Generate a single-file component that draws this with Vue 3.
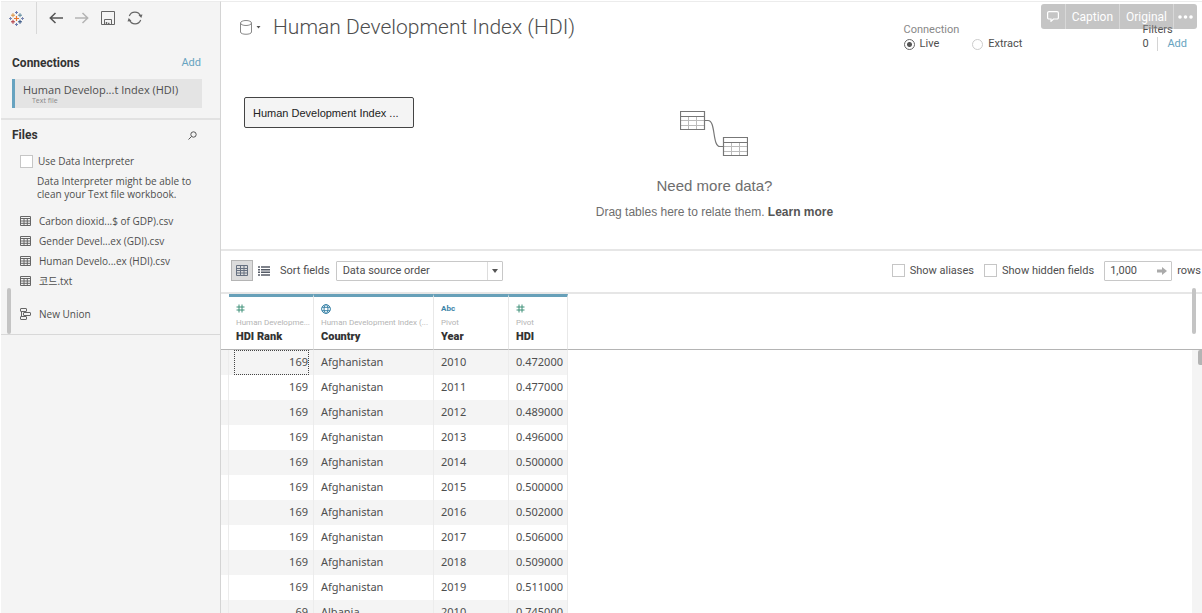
<script setup>
import { ref } from 'vue'

const files = ['Carbon dioxid...$ of GDP).csv', 'Gender Devel...ex (GDI).csv', 'Human Develo...ex (HDI).csv', '코드.txt']
const mode = ref('live')
const interpreter = ref(false)
const aliases = ref(false)
const hidden = ref(false)
const limit = ref('1,000')

const columns = [
  { type: 'number', source: 'Human Developme...', name: 'HDI Rank' },
  { type: 'geo', source: 'Human Development Index (...', name: 'Country' },
  { type: 'text', source: 'Pivot', name: 'Year' },
  { type: 'number', source: 'Pivot', name: 'HDI' },
]
const rows = [
  ['169', 'Afghanistan', '2010', '0.472000'],
  ['169', 'Afghanistan', '2011', '0.477000'],
  ['169', 'Afghanistan', '2012', '0.489000'],
  ['169', 'Afghanistan', '2013', '0.496000'],
  ['169', 'Afghanistan', '2014', '0.500000'],
  ['169', 'Afghanistan', '2015', '0.500000'],
  ['169', 'Afghanistan', '2016', '0.502000'],
  ['169', 'Afghanistan', '2017', '0.506000'],
  ['169', 'Afghanistan', '2018', '0.509000'],
  ['169', 'Afghanistan', '2019', '0.511000'],
  ['69', 'Albania', '2010', '0.745000'],
]
</script>

<template>
  <div class="app">
    <aside class="sidebar">
      <nav class="tools">
        <button class="logo" aria-label="Start page">
          <svg width="15" height="15" viewBox="0 0 15 15" fill="none">
            <path d="M7.5 5v5M5 7.5h5" stroke="#e8762d" stroke-width="1.2" />
            <path d="M4 2.2v4M2 4.2h4" stroke="#d9903d" />
            <path d="M11 2.2v4M9 4.2h4" stroke="#5b879b" />
            <path d="M4 8.8v4M2 10.8h4" stroke="#b0343c" />
            <path d="M11 8.8v4M9 10.8h4" stroke="#2a4a7c" />
            <path d="M7.5 0v3M6 1.5h3M7.5 12v3M6 13.5h3" stroke="#6b7bb0" />
            <path d="M1.5 6v3M0 7.5h3M13.5 6v3M12 7.5h3" stroke="#7a86b0" />
          </svg>
        </button>
        <button aria-label="Back">
          <svg width="14" height="12" viewBox="0 0 14 12" fill="none" stroke="#555" stroke-width="1.5"><path d="M14 6H1M6.500 1L1.300 6l5.200 5" /></svg>
        </button>
        <button aria-label="Forward">
          <svg width="14" height="12" viewBox="0 0 14 12" fill="none" stroke="#b4b4b4" stroke-width="1.500"><path d="M0 6h13M7.500 1l5.200 5-5.200 5" /></svg>
        </button>
        <button aria-label="Save">
          <svg width="14" height="14" viewBox="0 0 14 14" fill="none" stroke="#666"><path d="M.5.5h13v13h-13zM3.500 13.500v-5h7v5" /><path d="M5.500 11v2.500M7 12.500h1.500" stroke-width="1.500" /></svg>
        </button>
        <button aria-label="Refresh">
          <svg width="16" height="14" viewBox="0 0 16 14" fill="none" stroke="#666" stroke-width="1.200"><path d="M2.300 5A6 6 0 0 1 13.500 5M13.700 9A6 6 0 0 1 2.500 9" /><path d="M11.500 4l4-.5L14.300 7zM4.500 10l-4 .5L1.700 7z" fill="#666" stroke="none" /></svg>
        </button>
      </nav>

      <section class="connections">
        <div class="head"><h2>Connections</h2><a href="#">Add</a></div>
        <button class="connection">
          <span>Human Develop...t Index (HDI)</span>
          <small>Text file</small>
        </button>
      </section>

      <section class="files">
        <div class="head">
          <h2>Files</h2>
          <button aria-label="Search files">
            <svg width="9" height="9" viewBox="0 0 9 9" fill="none" stroke="#555"><circle cx="5.500" cy="3.500" r="2.700" /><path d="M3.500 5.500L.5 8.500" /></svg>
          </button>
        </div>
        <label class="interpreter"><input v-model="interpreter" type="checkbox" />Use Data Interpreter</label>
        <p>Data Interpreter might be able to clean your Text file workbook.</p>
        <ul>
          <li v-for="file in files" :key="file">
            <button class="file">
              <svg width="11" height="10" viewBox="0 0 11 10" fill="none" stroke="#666"><path d="M.5.5h10v9H.5zM.5 2.500h10M.5 5h10M.5 7.300h10M4 2.500v7M7.300 2.500v7" /></svg>
              {{ file }}
            </button>
          </li>
        </ul>
        <button class="file union">
          <svg width="11" height="12" viewBox="0 0 11 12" fill="none" stroke="#666"><rect x=".5" y=".5" width="6" height="3" rx=".5" /><rect x="3.500" y="4.500" width="7" height="3" rx=".5" /><rect x=".5" y="8.500" width="6" height="3" rx=".5" /><path d="M1.500 3.500v5" /></svg>
          New Union
        </button>
        <i class="thumb"></i>
      </section>
    </aside>

    <main class="main">
      <header class="top">
        <button class="source" aria-label="Data source menu">
          <svg width="21" height="15" viewBox="0 0 21 15" fill="none" stroke="#888"><ellipse cx="6" cy="3" rx="5.500" ry="2.500" /><path d="M.5 3v9c0 3 11 3 11 0V3" /><path d="M16.500 6h4l-2 2.500z" fill="#555" stroke="none" /></svg>
        </button>
        <h1>Human Development Index (HDI)</h1>
        <fieldset class="mode">
          <legend>Connection</legend>
          <label><input v-model="mode" type="radio" name="mode" value="live" />Live</label>
          <label><input v-model="mode" type="radio" name="mode" value="extract" />Extract</label>
        </fieldset>
        <div class="filters">
          <span>Filters</span>
          <div><b>0</b><a href="#">Add</a></div>
        </div>
        <div class="overlay">
          <button aria-label="Comment">
            <svg width="12" height="11" viewBox="0 0 12 11" fill="none" stroke="#fff" stroke-width="1.200"><path d="M2 .6h8a1.400 1.400 0 0 1 1.400 1.400v4.500A1.400 1.400 0 0 1 10 8H6.500L4 10.300V8H2A1.400 1.400 0 0 1 .6 6.500V2A1.400 1.400 0 0 1 2 .6z" /></svg>
          </button>
          <button>Caption</button>
          <button>Original</button>
          <button aria-label="More">
            <svg width="15" height="4" viewBox="0 0 15 4" fill="#fff"><circle cx="2" cy="2" r="1.800" /><circle cx="7.500" cy="2" r="1.800" /><circle cx="13" cy="2" r="1.800" /></svg>
          </button>
        </div>
      </header>

      <section class="canvas">
        <button class="node">Human Development Index ...</button>
        <div class="hint">
          <svg width="68" height="46" viewBox="0 0 68 46" fill="none">
            <path d="M1 9.500h23M1 14.500h23M8.500 6v13M16.500 6v13M44 35.500h23M44 40.500h23M51.500 32v13M59.500 32v13" stroke="#bbb" />
            <path d="M.5.5h24v18H.5zM.5 5.500h24M43.500 26.500h24v18h-24zM43.500 31.500h24M25 9.500h3c8 0 4 26 12 26h3" stroke="#777" stroke-width="1.200" />
          </svg>
          <h3>Need more data?</h3>
          <p>Drag tables here to relate them. <a href="#">Learn more</a></p>
        </div>
      </section>

      <div class="bar">
        <button class="view active" aria-label="Grid view">
          <svg width="12" height="11" viewBox="0 0 12 11" fill="none" stroke="#667080"><path d="M.5.5h11v10H.5zM.5 3.500h11M.5 5.500h11M.5 8h11M4.500 1v9.500M8 1v9.500" /></svg>
        </button>
        <button class="view" aria-label="List view">
          <svg width="12" height="10" viewBox="0 0 12 10" stroke="#555b66" stroke-width="1.400"><path d="M0 1h2M3 1h9M0 3.700h2M3 3.700h9M0 6.300h2M3 6.300h9M0 9h2M3 9h9" /></svg>
        </button>
        <label class="sort-label" for="sort">Sort fields</label>
        <div class="sort">
          <select id="sort"><option>Data source order</option></select>
          <span><svg width="6" height="4" viewBox="0 0 6 4" fill="#555"><path d="M0 0h6L3 4z" /></svg></span>
        </div>
        <label class="option"><input v-model="aliases" type="checkbox" />Show aliases</label>
        <label class="option"><input v-model="hidden" type="checkbox" />Show hidden fields</label>
        <div class="limit">
          <input id="limit" v-model="limit" type="text" />
          <svg width="10" height="8" viewBox="0 0 10 8" fill="#aaa"><path d="M0 2.500h5V0l5 4-5 4V5.500H0z" /></svg>
        </div>
        <label class="rows-label" for="limit">rows</label>
      </div>

      <section class="grid">
        <table>
          <colgroup><col class="c-gutter" /><col class="c-rank" /><col class="c-country" /><col class="c-year" /><col class="c-hdi" /><col /></colgroup>
          <thead>
            <tr>
              <td></td>
              <th v-for="col in columns" :key="col.name" scope="col">
                <div class="type">
                  <svg v-if="col.type === 'number'" width="9" height="9" viewBox="0 0 9 9" stroke="#3f9079"><path d="M3 .5v8M6 .5v8M.5 3h8M.5 6h8" /></svg>
                  <svg v-else-if="col.type === 'geo'" width="10" height="10" viewBox="0 0 10 10" fill="none" stroke="#3c84a8"><circle cx="5" cy="5" r="4.400" /><ellipse cx="5" cy="5" rx="2" ry="4.400" /><path d="M1 3.300h8M1 6.700h8" /></svg>
                  <span v-else>Abc</span>
                </div>
                <small>{{ col.source }}</small>
                <strong>{{ col.name }}</strong>
              </th>
              <td></td>
            </tr>
          </thead>
          <tbody>
            <tr v-for="(row, r) in rows" :key="r">
              <td></td>
              <td v-for="(cell, c) in row" :key="c" :class="{ rank: c === 0, focus: r === 0 && c === 0 }">{{ cell }}</td>
              <td class="rest"></td>
            </tr>
          </tbody>
        </table>
        <i class="thumb outer"></i>
        <div class="track"><i></i></div>
      </section>
    </main>
  </div>
</template>

<style>
body {
  overflow: hidden;
  background: #fff;
}
</style>

<style scoped>
* {
  box-sizing: border-box;
  margin: 0;
}
.app {
  display: grid;
  grid-template-columns: 220px minmax(0, 1fr);
  height: 100vh;
  padding: 1px 0 0 1px;
  overflow: hidden;
  color: #4e4e4e;
  font: 11px/14px Roboto, "Noto Sans CJK KR", sans-serif;
}
button {
  padding: 0;
  border: 0;
  background: none;
  color: inherit;
  font: inherit;
  text-align: left;
}
svg {
  display: block;
  flex: none;
}
a {
  color: #67a3c0;
  text-decoration: none;
}
input {
  appearance: none;
  flex: none;
  background: #fff;
}
input[type='checkbox'] {
  width: 13px;
  height: 13px;
  border: 1px solid #c6c6c6;
}
h2 {
  color: #333;
  font-size: 12px;
  font-weight: 700;
}
.sidebar {
  border-top: 1px solid #ececec;
  border-right: 1px solid #d4d4d4;
  background: #f4f4f4;
}
.tools {
  display: flex;
  align-items: center;
  gap: 12px;
  height: 32px;
  padding-left: 8px;
}
.logo {
  display: flex;
  align-items: center;
  align-self: stretch;
  padding-right: 12px;
  border-right: 1px solid #d8d8d8;
}
.connections {
  padding: 22px 18px 10px 11px;
  border-bottom: 2px solid #e2e2e2;
}
.head {
  display: flex;
  justify-content: space-between;
  align-items: center;
  padding-right: 1px;
}
.connection {
  display: block;
  width: 100%;
  height: 29px;
  margin-top: 9px;
  padding-left: 8px;
  border-left: 3px solid #67a3c0;
  background: #e4e4e4;
  font-family: "Open Sans", sans-serif;
}
.connection span,
.connection small {
  display: block;
}
.connection span {
  line-height: 13px;
}
.connection small {
  padding-left: 9px;
  color: #888;
  font-size: 7px;
  line-height: 9px;
}
.files {
  position: relative;
  padding: 8px 18px 10px 19px;
  border-bottom: 1px solid #d8d8d8;
  font-family: "Open Sans", "Noto Sans CJK KR", sans-serif;
  font-size: 10px;
}
.files .head {
  margin: 0 4px 0 -8px;
}
.files h2 {
  font-family: Roboto, sans-serif;
}
.interpreter {
  display: flex;
  align-items: center;
  gap: 5px;
  margin-top: 12px;
}
.files p {
  padding: 7px 0 0 17px;
  line-height: 13px;
}
ul {
  margin-top: 10px;
  padding: 0;
  list-style: none;
}
.file {
  display: flex;
  align-items: center;
  gap: 8px;
  width: 100%;
  height: 20px;
}
.union {
  margin-top: 13px;
}
.thumb {
  position: absolute;
  width: 4px;
  height: 46px;
  border-radius: 2px;
  background: #c4c4c4;
}
.files .thumb {
  left: 6px;
  bottom: 0;
}
.main {
  display: flex;
  flex-direction: column;
  min-width: 0;
  border-top: 1px solid #ececec;
}
.top {
  position: relative;
  display: flex;
  align-items: center;
  height: 50px;
  padding: 0 15px 0 19px;
}
.source {
  margin-right: 12px;
}
h1 {
  flex: 1;
  font-size: 21px;
  font-weight: 300;
  line-height: 28px;
}
.mode {
  display: flex;
  width: 150px;
  padding: 0;
  border: 0;
  margin: 20px 87px 0 0;
}
.mode legend {
  padding: 0;
  color: #888;
}
.mode label {
  display: flex;
  align-items: center;
  gap: 5px;
  margin-right: 33px;
}
.mode input {
  width: 11px;
  height: 11px;
  border: 1px solid #ccc;
  border-radius: 50%;
}
.mode input:checked {
  border-color: #666;
  background: radial-gradient(circle, #555 2px, #fff 3px);
}
.filters {
  margin-top: 20px;
}
.filters div {
  display: flex;
}
.filters b {
  width: 16px;
  border-right: 1px solid #d4d4d4;
  font-weight: 400;
}
.filters a {
  padding-left: 9px;
}
.overlay {
  position: absolute;
  top: 2px;
  right: 5px;
  display: flex;
  height: 25px;
  overflow: hidden;
  border-radius: 3px;
  background: rgb(140 140 140 / 50%);
  color: #fff;
  font-size: 12px;
}
.overlay button {
  display: flex;
  align-items: center;
  padding: 0 6px;
}
.overlay button + button {
  border-left: 1px solid #d8d8d8;
}
.overlay button:last-child {
  padding: 0 4px;
}
.canvas {
  position: relative;
  display: flex;
  justify-content: center;
  height: 199px;
  padding: 59px 0 0 6px;
  border-bottom: 2px solid #e6e6e6;
}
.node {
  position: absolute;
  top: 45px;
  left: 23px;
  width: 170px;
  height: 31px;
  padding-left: 8px;
  border: 1px solid #444;
  border-radius: 2px;
  background: #f4f4f4;
  color: #222;
  font-family: "Liberation Sans", Arial, sans-serif;
}
.hint {
  display: flex;
  flex-direction: column;
  align-items: center;
  color: #6e6e6e;
  font: 12px/14px "Liberation Sans", Arial, sans-serif;
}
.hint h3 {
  margin: 20px 0 10px;
  font-size: 15px;
  font-weight: 400;
  line-height: 18px;
}
.hint a {
  color: #555;
  font-weight: 700;
}
.bar {
  display: flex;
  align-items: center;
  height: 43px;
  padding: 0 1px 2px 10px;
  border-bottom: 2px solid #e6e6e6;
}
.view {
  display: grid;
  place-items: center;
  width: 22px;
  height: 21px;
}
.view.active {
  border: 1px solid #b4b4b4;
  background: #dcdcdc;
}
.sort-label {
  margin: 0 6px 0 5px;
}
.sort {
  position: relative;
  margin-right: auto;
}
.sort select {
  display: block;
  appearance: none;
  width: 167px;
  height: 20px;
  padding: 0 6px;
  border: 1px solid #c8c8c8;
  border-radius: 1px;
  background: #fff;
  color: inherit;
  font: inherit;
}
.sort span {
  position: absolute;
  inset: 1px 1px 1px auto;
  display: grid;
  place-items: center;
  width: 15px;
  border-left: 1px solid #ddd;
  pointer-events: none;
}
.option {
  display: flex;
  align-items: center;
  gap: 5px;
  margin-right: 10px;
}
.limit {
  display: flex;
  align-items: center;
  width: 68px;
  height: 20px;
  padding: 0 4px 0 5px;
  border: 1px solid #c8c8c8;
  border-radius: 1px;
}
.limit input {
  flex: 1;
  min-width: 0;
  padding: 0;
  border: 0;
  color: inherit;
  font: inherit;
}
.rows-label {
  margin-left: 5px;
}
.grid {
  position: relative;
  flex: 1;
  min-height: 0;
}
.grid table {
  width: 100%;
  table-layout: fixed;
  border-collapse: separate;
  border-spacing: 0;
}
.c-gutter {
  width: 8px;
}
.c-rank {
  width: 85px;
}
.c-country {
  width: 120px;
}
.c-year {
  width: 75px;
}
.c-hdi {
  width: 59px;
}
thead td,
th {
  padding: 0;
  border-bottom: 1px solid #b4b4b4;
}
th {
  padding: 0 0 5px 7px;
  border-top: 3px solid #67a0b9;
  border-right: 1px solid #e8e8e8;
  text-align: left;
  white-space: nowrap;
}
.type {
  display: flex;
  align-items: center;
  height: 19px;
  padding-top: 4px;
}
.type span {
  color: #3c84a8;
  font-size: 8px;
}
th small,
th strong {
  display: block;
}
th small {
  color: #b4b4b4;
  font-size: 8px;
  font-weight: 400;
  line-height: 14px;
}
th strong {
  color: #333;
  font-size: 11px;
  line-height: 14px;
}
tbody td {
  height: 25px;
  padding: 0 0 1px 7px;
  border-right: 1px solid #ececec;
  font: 11px/14px "Noto Sans", sans-serif;
}
tbody tr:nth-child(odd) td {
  background: #f4f4f4;
}
tbody tr td.rest {
  border: 0;
  background: #fff;
}
td.rank {
  padding-right: 5px;
  text-align: right;
}
td.focus {
  position: relative;
}
td.focus::after {
  content: '';
  position: absolute;
  inset: 0 4px 0 5px;
  border: 1px dotted #444;
}
.outer {
  top: -6px;
  right: 6px;
}
.track {
  position: absolute;
  inset: 56px 0 0 auto;
  width: 10px;
  background: #f4f4f4;
}
.track i {
  display: block;
  width: 4px;
  height: 15px;
  margin-left: auto;
  border-radius: 2px 0 0 2px;
  background: #b4b4b4;
}
</style>
